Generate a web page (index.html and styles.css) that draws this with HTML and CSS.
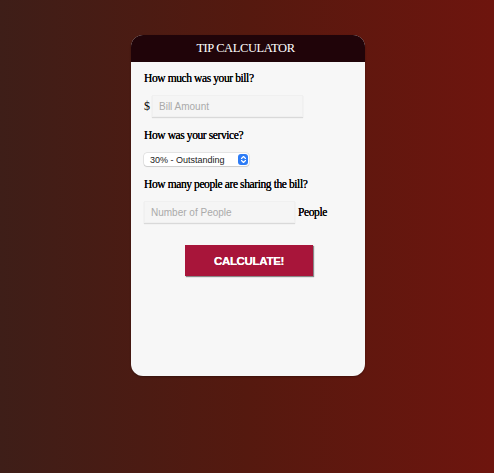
FILE: index.html
```html
<!DOCTYPE html>
<html>
<head>
<meta charset="utf-8">
<link rel="stylesheet" href="styles.css">
</head>
<body>
<div class="card">
  <div class="card-head">TIP CALCULATOR</div>
  <div class="card-body">
    <p class="question">How much was your bill?</p>
    <div class="row">
      <span class="cur">$</span>
      <input class="field field-bill" type="text" placeholder="Bill Amount">
    </div>
    <p class="question">How was your service?</p>
    <div class="select">
      <span>30% - Outstanding</span>
      <span class="stepper">
        <svg width="7" height="9" viewBox="0 0 7 9"><path d="M1.5 3.5 L3.5 1.5 L5.5 3.5 M1.5 5.5 L3.5 7.5 L5.5 5.5" fill="none" stroke="#fff" stroke-width="1.1" stroke-linecap="round" stroke-linejoin="round"/></svg>
      </span>
    </div>
    <p class="question">How many people are sharing the bill?</p>
    <div class="row">
      <input class="field field-people" type="text" placeholder="Number of People">
      <span class="unit">People</span>
    </div>
    <div class="actions">
      <button class="btn" type="button">CALCULATE!</button>
    </div>
  </div>
</div>
</body>
</html>
```
FILE: styles.css
```css
html, body {
  margin: 0;
  height: 100%;
}
body {
  background: linear-gradient(to right, #3e1e18 0%, #55190f 50%, #6e150e 100%);
  font-family: "Liberation Serif", "Times New Roman", serif;
  padding-top: 35px;
  box-sizing: border-box;
}
.card {
  width: 234px;
  height: 341px;
  margin: 0 auto;
  background: #f7f7f7;
  border-radius: 12px;
  overflow: hidden;
  box-shadow: 0 1px 2px rgba(0,0,0,0.3);
  position: relative;
  left: 1px;
}
.card-head {
  background: #200409;
  color: #fff;
  height: 27px;
  line-height: 27px;
  text-align: center;
  font-size: 12.5px;
  letter-spacing: -0.4px;
  padding-right: 5px;
}
.card-body {
  padding: 8px 13px 0;
}
.question {
  margin: 0;
  font-size: 11.5px;
  letter-spacing: -0.4px;
  color: #000;
  line-height: 16px;
  text-shadow: 0 0 0.3px #000;
}
.row {
  display: flex;
  align-items: center;
  margin-top: 9px;
  margin-bottom: 10px;
}
.cur {
  font-size: 12px;
  width: 8px;
  color: #000;
}
.field {
  height: 22px;
  box-sizing: border-box;
  border: 1px solid #f0f0f0;
  background: #f5f5f5;
  box-shadow: 0 1px 1px rgba(0,0,0,0.12);
  font-family: "Liberation Sans", Arial, sans-serif;
  font-size: 10px;
  padding: 0 6px;
  outline: none;
}
.field::placeholder {
  color: #aaa;
}
.field-bill {
  width: 151px;
}
.field-people {
  width: 151px;
}
.unit {
  font-size: 11.5px;
  letter-spacing: -0.4px;
  margin-left: 3px;
  color: #000;
  text-shadow: 0 0 0.3px #000;
}
.select {
  margin-top: 10px;
  margin-bottom: 10px;
  width: 105px;
  height: 13px;
  box-sizing: border-box;
  background: #fff;
  border-radius: 3px;
  box-shadow: 0 0 0 0.5px rgba(0,0,0,0.15), 0 1px 1px rgba(0,0,0,0.1);
  display: flex;
  align-items: center;
  justify-content: space-between;
  padding: 0 1px 0 6px;
  font-family: "Liberation Sans", Arial, sans-serif;
  font-size: 9px;
  color: #222;
}
.stepper {
  width: 10px;
  height: 11px;
  border-radius: 3px;
  background: #2d7cf6;
  display: flex;
  align-items: center;
  justify-content: center;
}
.actions {
  display: flex;
  justify-content: center;
  margin-top: 22px;
}
.btn {
  width: 128px;
  height: 31px;
  border: none;
  background: #a8153a;
  color: #fff;
  font-family: "Liberation Sans", Arial, sans-serif;
  font-weight: bold;
  font-size: 11.5px;
  letter-spacing: -0.3px;
  text-shadow: 0 0 0.4px #fff;
  box-shadow: 1px 1px 1px rgba(0,0,0,0.45);
  padding: 0;
  position: relative;
  left: 1px;
}
```
